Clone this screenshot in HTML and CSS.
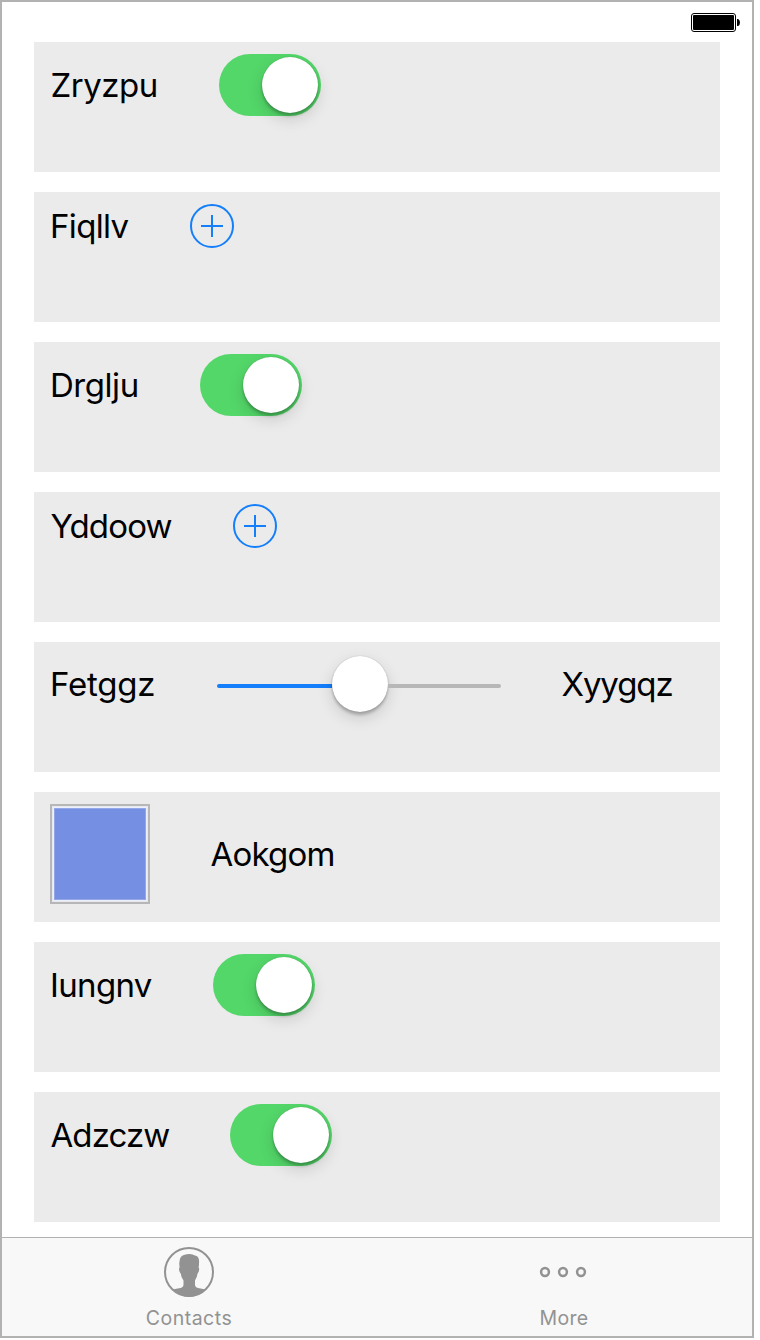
FILE: index.html
```html
<!DOCTYPE html>
<html lang="en">
<head>
<meta charset="utf-8">
<title>Contacts</title>
<link rel="stylesheet" href="styles.css">
</head>
<body>
<div class="device">
  <header class="status">
    <svg class="battery" width="50" height="20" viewBox="0 0 50 20">
      <rect x=".5" y=".5" width="44" height="18" rx="2.5" fill="none" stroke="#000"/>
      <rect x="2" y="2" width="41" height="15" rx="1" fill="#000"/>
      <path d="M46 6h1.2q1.8 1 1.8 3.5T47.200 13H46z" fill="#000"/>
    </svg>
  </header>
  <main class="list">
    <section class="card"><div class="row"><span class="label zryzpu">Zryzpu</span><span class="switch"><span class="knob"></span></span></div></section>
    <section class="card"><div class="row"><span class="label fiqllv">Fiqllv</span><svg class="add" viewBox="0 0 44 44"><circle cx="22" cy="22" r="21"/><path d="M22 11v22M11 22h22"/></svg></div></section>
    <section class="card"><div class="row"><span class="label drglju">Drglju</span><span class="switch"><span class="knob"></span></span></div></section>
    <section class="card"><div class="row"><span class="label yddoow">Yddoow</span><svg class="add" viewBox="0 0 44 44"><circle cx="22" cy="22" r="21"/><path d="M22 11v22M11 22h22"/></svg></div></section>
    <section class="card"><div class="row slider-row"><span class="label fetggz">Fetggz</span><span class="slider"><span class="track filled"></span><span class="knob"></span><span class="track"></span></span><span class="label xyygqz">Xyygqz</span></div></section>
    <section class="card"><div class="row"><span class="swatch"></span><span class="label aokgom">Aokgom</span></div></section>
    <section class="card"><div class="row"><span class="label iungnv">Iungnv</span><span class="switch"><span class="knob"></span></span></div></section>
    <section class="card"><div class="row"><span class="label adzczw">Adzczw</span><span class="switch"><span class="knob"></span></span></div></section>
  </main>
  <nav class="tabs">
    <div class="tab">
      <svg class="tab-icon" viewBox="0 0 50 50">
        <circle cx="25" cy="25" r="24" fill="none" stroke="#929292" stroke-width="2"/>
        <path fill="#929292" d="M8.500 42.500Q12 41.500 16.500 41Q19.500 40 19.500 37.500V33.500Q17.200 30.500 16.700 26.500Q15.200 25.500 15 21.500L15.600 20.500Q14.500 13 17 9.800Q20 7 25.500 7Q29 7 31 8.600Q34.400 9 35 13Q35.300 17 34.600 20.500L35.200 21.500Q35 25.500 33.600 26.500Q33 30.500 31 33.500V37.500Q31 40 34 41Q38 41.500 41.500 42.500Q34 50 25 50T8.500 42.500z"/>
      </svg>
      <span class="tab-label contacts">Contacts</span>
    </div>
    <div class="tab">
      <svg class="tab-icon" viewBox="0 0 50 50" fill="none" stroke="#929292" stroke-width="2.500">
        <circle cx="6" cy="25" r="3.900"/><circle cx="24" cy="25" r="3.900"/><circle cx="42" cy="25" r="3.900"/>
      </svg>
      <span class="tab-label more">More</span>
    </div>
  </nav>
</div>
</body>
</html>
```
FILE: styles.css
```css
* { box-sizing: border-box; }
body { margin: 0; background: #fff; font-family: Inter, "Liberation Sans", sans-serif; }
.device { width: 754px; height: 1338px; border: 2px solid #b2b2b2; background: #fff; display: flex; flex-direction: column; }
.status { height: 40px; flex: none; display: flex; justify-content: flex-end; padding: 11px 11px 0 0; }
.battery { display: block; }
.list { flex: 1; display: flex; flex-direction: column; gap: 20px; padding: 0 32px; }
.card { height: 130px; flex: none; background: #ebebeb; padding: 12px 16px; }
.row { display: flex; align-items: center; gap: 60px; }
.slider-row { height: 60px; }
.label { flex: none; font-size: 33px; line-height: 44px; color: #000; white-space: nowrap; }
.zryzpu { width: 109px; padding-left: 0.5px; letter-spacing: -0.5px; }
.fiqllv { width: 80px; letter-spacing: -0.65px; }
.drglju { width: 90px; letter-spacing: -0.45px; }
.yddoow { width: 123px; padding-left: 0.5px; letter-spacing: -0.85px; }
.fetggz { width: 105px; letter-spacing: -0.2px; }
.xyygqz { width: 112px; margin-left: -1.5px; letter-spacing: -1.1px; }
.aokgom { width: 126px; padding-left: 0.5px; letter-spacing: -0.8px; }
.iungnv { width: 103px; letter-spacing: -0.65px; }
.adzczw { width: 120px; padding-left: 0.5px; letter-spacing: -0.9px; }
.switch { width: 102px; height: 62px; border-radius: 31px; background: #53d769; display: flex; align-items: center; justify-content: flex-end; padding: 3px; flex: none; }
.knob { width: 56px; height: 56px; border-radius: 50%; background: #fff; flex: none; box-shadow: 0 0 1px rgba(0,0,0,.3), 0 3px 3px rgba(0,0,0,.22), 0 6px 16px rgba(0,0,0,.15); }
.add { width: 44px; height: 44px; flex: none; fill: none; stroke: #147efb; stroke-width: 2; }
.slider { width: 288px; padding: 0 2px; display: flex; align-items: center; flex: none; }
.track { height: 4px; flex: 1; background: #b7b7b7; border-radius: 0 2px 2px 0; margin-top: 4px; }
.filled { flex: 0 0 115px; background: #147efb; border-radius: 2px 0 0 2px; }
.swatch { width: 100px; height: 100px; flex: none; border: 2px solid #b7b7b7; background: #758fe2; box-shadow: inset 0 0 0 1px #e5e8ef, inset 0 0 0 2px #edf0fa, inset 0 0 0 3px #92a6e8; }
.tabs { height: 99px; flex: none; display: flex; background: #f8f8f8; border-top: 1px solid #b2b2b2; padding-right: 1px; }
.tab { flex: 0 0 375px; display: flex; flex-direction: column; align-items: center; padding: 9px 1px 0 0; }
.tab-icon { width: 50px; height: 50px; display: block; }
.tab-label { margin-top: 9px; font-size: 19.5px; line-height: 24px; color: #929292; }
.contacts { letter-spacing: 0.5px; }
.more { letter-spacing: 0.3px; }
```
